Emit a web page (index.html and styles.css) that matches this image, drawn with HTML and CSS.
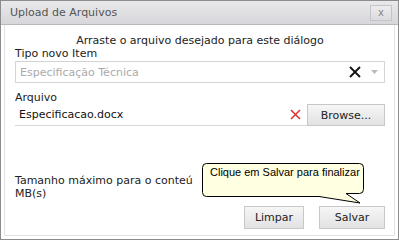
FILE: index.html
```html
<!DOCTYPE html>
<html>
<head>
<meta charset="utf-8">
<link rel="stylesheet" href="styles.css">
</head>
<body>
<div class="dialog">
  <div class="titlebar">
    <span class="title">Upload de Arquivos</span>
    <span class="close">x</span>
  </div>
  <div class="content">
    <div class="hint">Arraste o arquivo desejado para este diálogo</div>
    <div class="label">Tipo novo Item</div>
    <div class="select">
      <span class="placeholder">Especificação Técnica</span>
      <svg class="clear" width="12" height="12" viewBox="0 0 12 12"><path d="M1 1L11 11M11 1L1 11" stroke="#111" stroke-width="1.8"/></svg>
      <svg class="arrow" width="7" height="4" viewBox="0 0 7 4"><path d="M0 0H7L3.5 4Z" fill="#bbb"/></svg>
    </div>
    <div class="label">Arquivo</div>
    <div class="filerow">
      <div class="filefield">
        <span class="filename">Especificacao.docx</span>
        <svg class="remove" width="11" height="11" viewBox="0 0 11 11"><path d="M1 1L10 10M10 1L1 10" stroke="#d33" stroke-width="1.5"/></svg>
      </div>
      <button class="btn browse">Browse...</button>
    </div>
    <div class="size">Tamanho máximo para o conteú<br>MB(s)</div>
    <div class="actions">
      <button class="btn action">Limpar</button>
      <button class="btn action save">Salvar</button>
    </div>
    <div class="tooltip">
      <svg class="bubble" width="170" height="44" viewBox="0 0 170 44"><path d="M5.5 0.5H158.5Q162.5 0.5 162.5 4.5V26.5Q162.5 30.5 158.5 30.5H145L159 40L118 33.5H5.5Q1.5 33.5 1.5 29.5V4.5Q1.5 0.5 5.5 0.5Z" fill="#ffffe1" stroke="#000" stroke-width="1"/></svg>
      <span class="tiptext">Clique em Salvar para finalizar</span>
    </div>
  </div>
</div>
</body>
</html>
```
FILE: styles.css
```css
html, body { margin: 0; padding: 0; background: #fff; }
body { font-family: "DejaVu Sans", Verdana, sans-serif; font-size: 11px; color: #222; }
.dialog {
  width: 399px; height: 240px; box-sizing: border-box;
  border: 1px solid #8c8c8c; display: flex; flex-direction: column;
  overflow: hidden;
}
.titlebar {
  height: 24px; flex: none; box-sizing: border-box;
  background: linear-gradient(#e9e9ec, #d7d7db);
  border-bottom: 1px solid #b9b9bd;
  display: flex; align-items: center; justify-content: space-between;
  padding: 0 6px 0 9px;
}
.title { color: #555; font-size: 11px; }
.close {
  width: 22px; height: 16px; box-sizing: border-box;
  border: 1px solid #c4c4c8; background: linear-gradient(#ececef, #dcdce0);
  color: #888; font-size: 10px; line-height: 13px; text-align: center;
}
.content {
  flex: 1; position: relative; margin: 0 3px 3px 3px;
  border: 1px solid #e2e2e2; border-top: none;
  padding: 9px 9px 0 10px;
  display: flex; flex-direction: column;
}
.hint { text-align: center; color: #222; height: 13px; line-height: 13px; }
.label { height: 14px; line-height: 14px; color: #222; }
.select {
  height: 22px; box-sizing: border-box; border: 1px solid #d4d4d4;
  display: flex; align-items: center; padding: 0 6px 0 4px;
  margin-bottom: 8px;
}
.placeholder { color: #aaa; flex: 1; }
.clear { margin-right: 10px; }
.filerow { display: flex; height: 22px; margin-top: -1px; }
.filefield {
  flex: 1; display: flex; align-items: center; padding: 0 6px 0 4px;
  border-bottom: 1px solid #d8d8d8;
}
.filename { flex: 1; color: #111; }
.btn {
  font-family: "DejaVu Sans", Verdana, sans-serif; font-size: 11px; color: #222;
  border: 1px solid #c8c8c8; background: linear-gradient(#f6f6f6, #e2e2e4);
  padding: 0; border-radius: 0;
}
.browse { width: 78px; height: 22px; }
.size { margin-top: 48px; line-height: 13px; color: #222; }
.actions { display: flex; justify-content: flex-end; gap: 15px; margin-top: 6px; padding-right: 0; }
.action { width: 60px; height: 23px; }
.save { width: 66px; }
.tooltip { position: absolute; left: 196px; top: 138px; width: 170px; height: 44px; }
.bubble { position: absolute; left: 0; top: 0; }
.tiptext {
  position: absolute; left: 9px; top: 3px;
  font-family: "Liberation Sans", Arial, sans-serif; font-size: 11px; color: #000;
}
```
